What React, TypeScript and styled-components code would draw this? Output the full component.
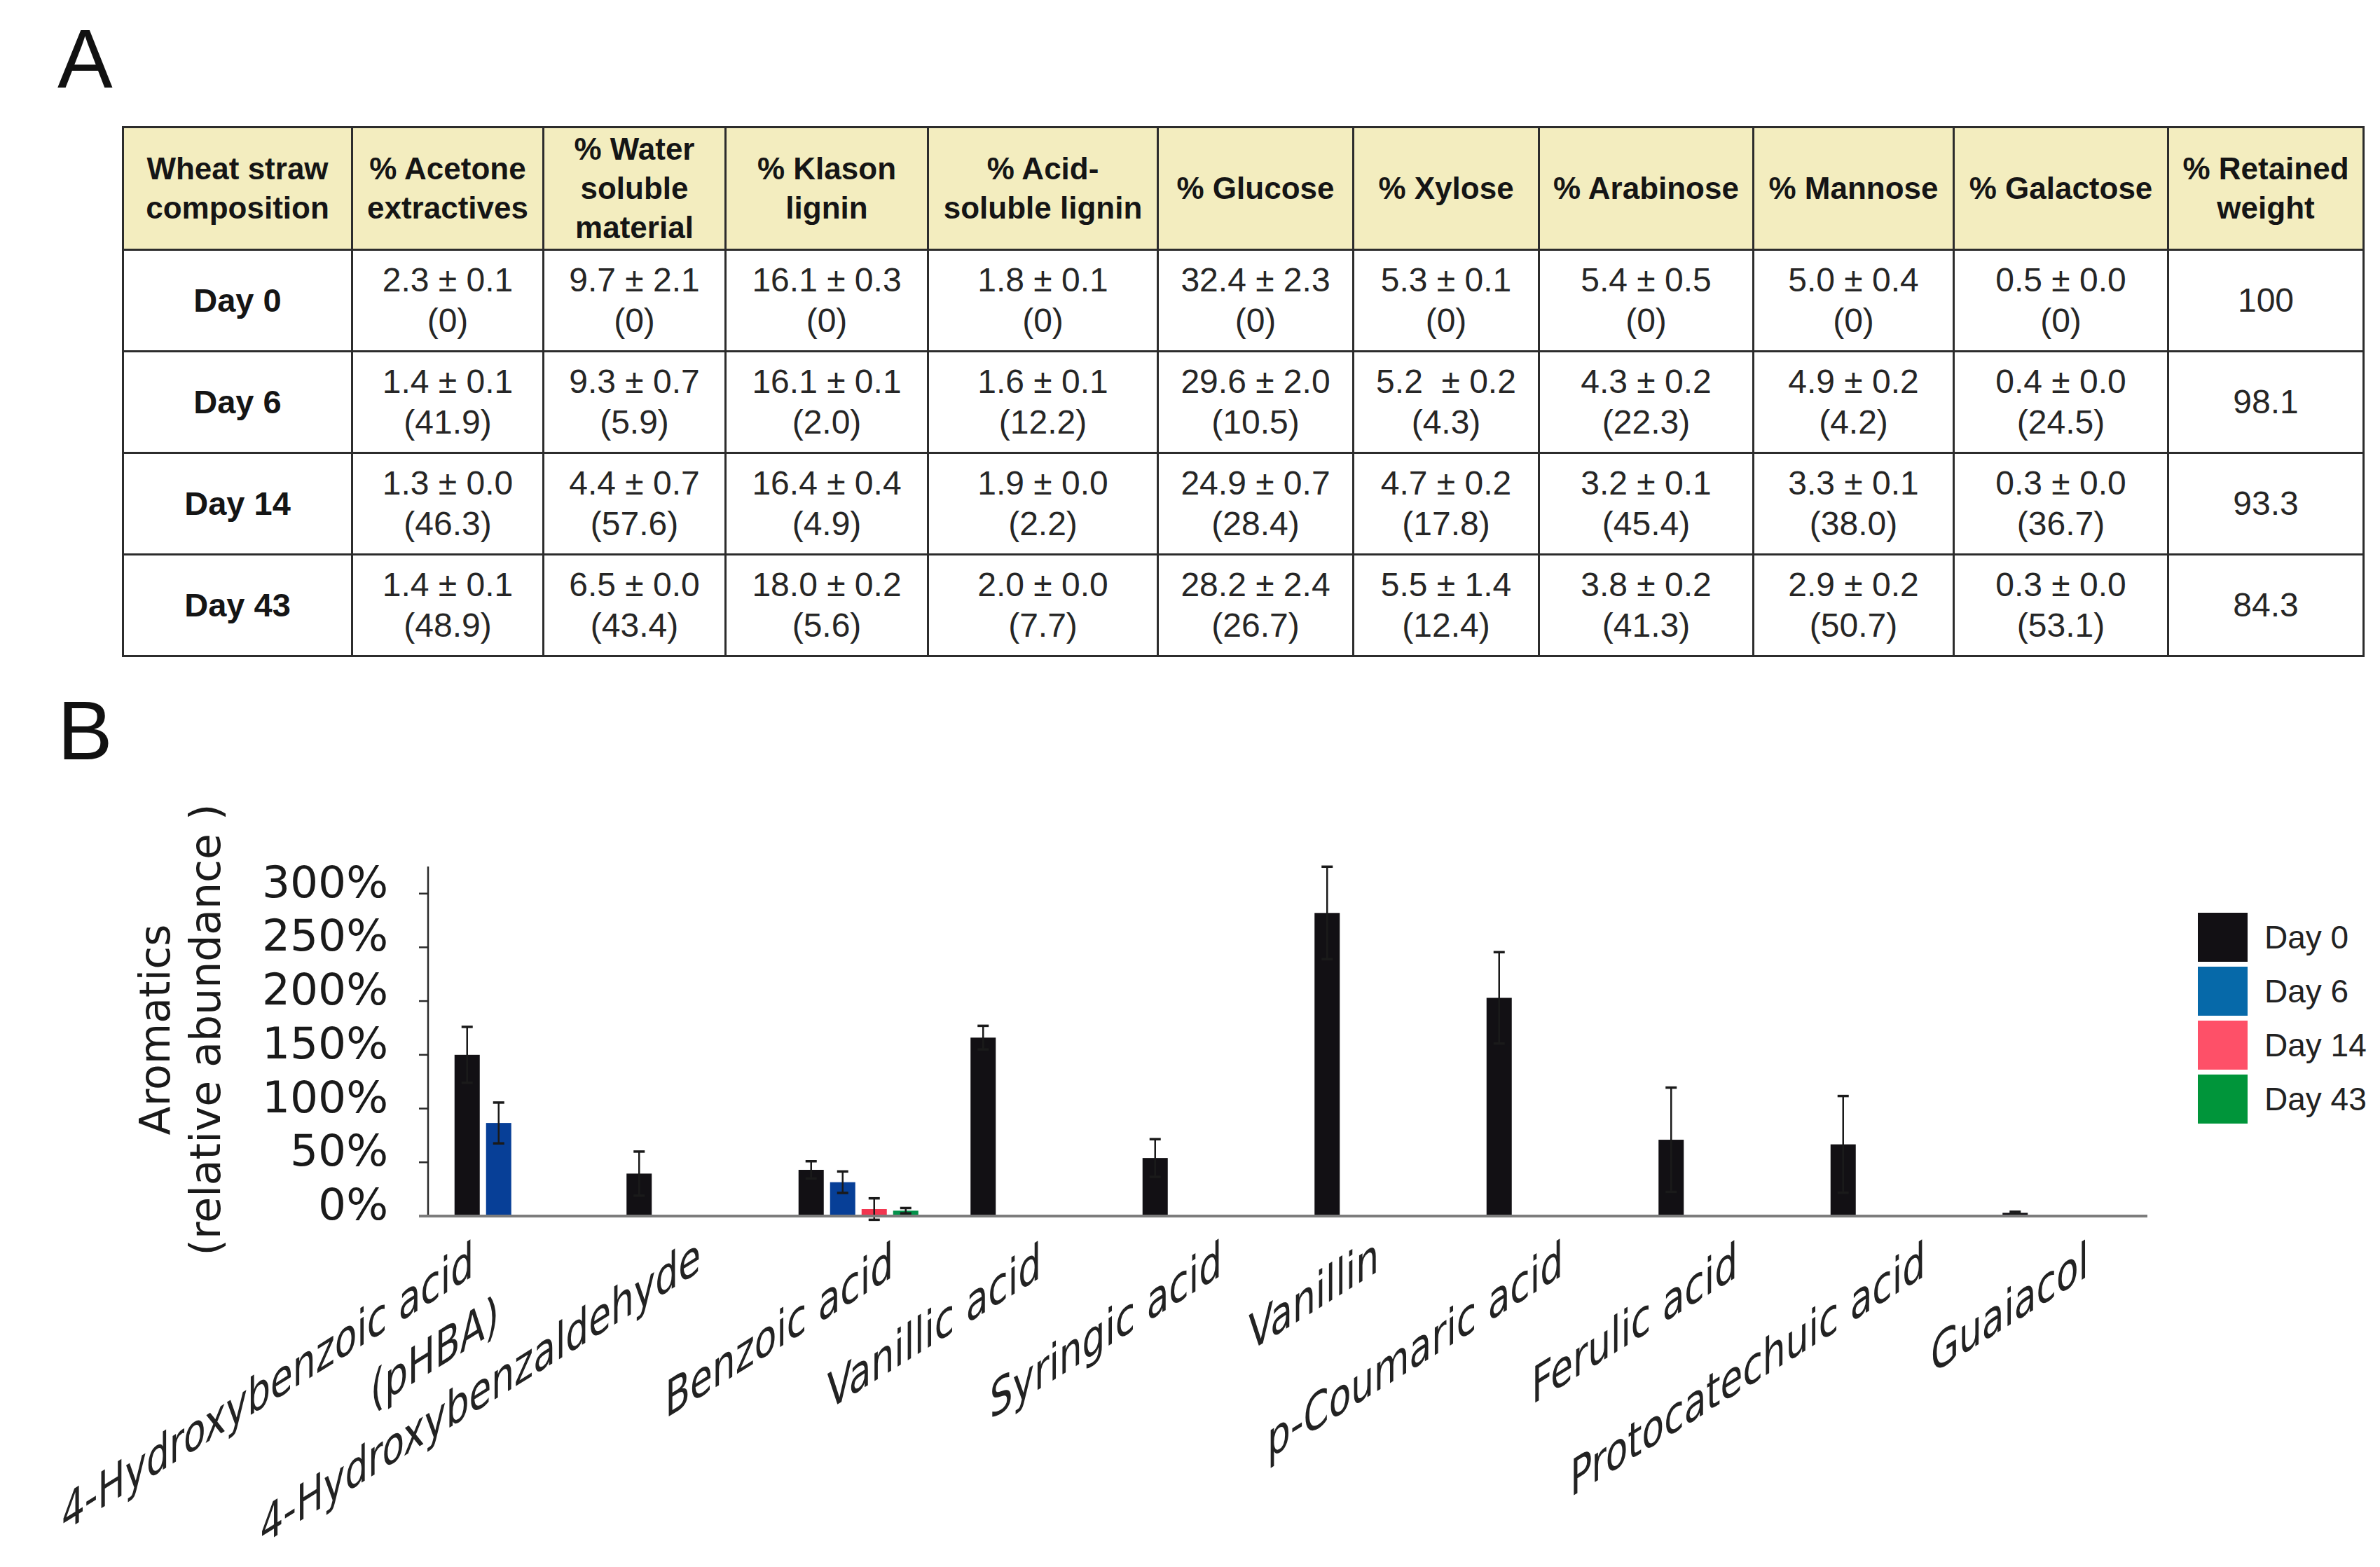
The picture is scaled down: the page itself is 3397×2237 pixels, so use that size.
import React from 'react'
import styled, { createGlobalStyle } from 'styled-components'

const GlobalStyle = createGlobalStyle`
  html, body {
    margin: 0;
    padding: 0;
    background: #ffffff;
  }
  body {
    width: 3397px;
    height: 2237px;
    overflow: hidden;
    font-family: 'Liberation Sans', Arial, sans-serif;
    color: #111;
  }
`

const Page = styled.div`
  width: 3397px;
  height: 2237px;
  box-sizing: border-box;
  padding-top: 25px;
  display: flex;
  flex-direction: column;
`

const PanelLetter = styled.div<{ $gap?: number }>`
  font-family: 'Liberation Sans', Arial, sans-serif;
  font-size: 118px;
  line-height: 118px;
  padding-left: 82px;
  margin-top: ${(p) => p.$gap ?? 0}px;
  color: #111;
`

const Table = styled.table`
  margin: 37px 0 0 174px;
  width: 3198px;
  border-collapse: collapse;
  table-layout: fixed;
  font-family: 'Liberation Sans', Arial, sans-serif;
`

const Col = styled.col<{ $w: number }>`
  width: ${(p) => p.$w}px;
`

const HeadRow = styled.tr`
  height: 175px;
`

const BodyRow = styled.tr`
  height: 145px;
`

const HeadCell = styled.th`
  background: #f3edbf;
  border: 3px solid #2c2c2c;
  padding: 0 4px;
  font-size: 44px;
  line-height: 56px;
  font-weight: 700;
  color: #151515;
  text-align: center;
  vertical-align: middle;
`

const BodyCell = styled.td<{ $bold?: boolean }>`
  border: 3px solid #2c2c2c;
  padding: 0 4px;
  font-size: ${(p) => (p.$bold ? 47 : 48)}px;
  line-height: 58px;
  font-weight: ${(p) => (p.$bold ? 700 : 400)};
  color: ${(p) => (p.$bold ? '#151515' : '#262626')};
  text-align: center;
  vertical-align: middle;
  white-space: pre;
`

const ChartRow = styled.div`
  display: flex;
  align-items: flex-start;
`

const ChartSvg = styled.svg`
  display: block;
  flex: none;
`

const TickLabel = styled.text`
  font-family: 'DejaVu Sans', Verdana, sans-serif;
  font-size: 63px;
  fill: #1a1a1a;
`

const AxisTitle = styled.text`
  font-family: 'DejaVu Sans', Verdana, sans-serif;
  font-size: 60px;
  fill: #1a1a1a;
`

const CategoryLabel = styled.text`
  font-family: 'DejaVu Sans', Verdana, sans-serif;
  font-size: 61px;
  fill: #222;
`

const Legend = styled.div`
  display: flex;
  flex-direction: column;
  gap: 7px;
  margin: 201px 0 0 27px;
`

const LegendItem = styled.div`
  display: flex;
  align-items: center;
  gap: 24px;
`

const Swatch = styled.div<{ $color: string }>`
  width: 71px;
  height: 70px;
  background: ${(p) => p.$color};
`

const LegendText = styled.span`
  font-family: 'Liberation Sans', Arial, sans-serif;
  font-size: 46px;
  color: #222;
`

const colWidths = [327, 273, 260, 289, 328, 279, 265, 306, 286, 306, 279]

const headers: string[][] = [
  ['Wheat straw', 'composition'],
  ['% Acetone', 'extractives'],
  ['% Water', 'soluble', 'material'],
  ['% Klason', 'lignin'],
  ['% Acid-', 'soluble lignin'],
  ['% Glucose'],
  ['% Xylose'],
  ['% Arabinose'],
  ['% Mannose'],
  ['% Galactose'],
  ['% Retained', 'weight'],
]

const rows: { day: string; cells: [string, string][]; retained: string }[] = [
  {
    day: 'Day 0',
    cells: [
      ['2.3 ± 0.1', '(0)'],
      ['9.7 ± 2.1', '(0)'],
      ['16.1 ± 0.3', '(0)'],
      ['1.8 ± 0.1', '(0)'],
      ['32.4 ± 2.3', '(0)'],
      ['5.3 ± 0.1', '(0)'],
      ['5.4 ± 0.5', '(0)'],
      ['5.0 ± 0.4', '(0)'],
      ['0.5 ± 0.0', '(0)'],
    ],
    retained: '100',
  },
  {
    day: 'Day 6',
    cells: [
      ['1.4 ± 0.1', '(41.9)'],
      ['9.3 ± 0.7', '(5.9)'],
      ['16.1 ± 0.1', '(2.0)'],
      ['1.6 ± 0.1', '(12.2)'],
      ['29.6 ± 2.0', '(10.5)'],
      ['5.2  ± 0.2', '(4.3)'],
      ['4.3 ± 0.2', '(22.3)'],
      ['4.9 ± 0.2', '(4.2)'],
      ['0.4 ± 0.0', '(24.5)'],
    ],
    retained: '98.1',
  },
  {
    day: 'Day 14',
    cells: [
      ['1.3 ± 0.0', '(46.3)'],
      ['4.4 ± 0.7', '(57.6)'],
      ['16.4 ± 0.4', '(4.9)'],
      ['1.9 ± 0.0', '(2.2)'],
      ['24.9 ± 0.7', '(28.4)'],
      ['4.7 ± 0.2', '(17.8)'],
      ['3.2 ± 0.1', '(45.4)'],
      ['3.3 ± 0.1', '(38.0)'],
      ['0.3 ± 0.0', '(36.7)'],
    ],
    retained: '93.3',
  },
  {
    day: 'Day 43',
    cells: [
      ['1.4 ± 0.1', '(48.9)'],
      ['6.5 ± 0.0', '(43.4)'],
      ['18.0 ± 0.2', '(5.6)'],
      ['2.0 ± 0.0', '(7.7)'],
      ['28.2 ± 2.4', '(26.7)'],
      ['5.5 ± 1.4', '(12.4)'],
      ['3.8 ± 0.2', '(41.3)'],
      ['2.9 ± 0.2', '(50.7)'],
      ['0.3 ± 0.0', '(53.1)'],
    ],
    retained: '84.3',
  },
]

// chart geometry, in page pixels
const SVG_TOP = 1102
const SVG_W = 3110
const SVG_H = 2237 - SVG_TOP
const AXIS_X = 611
const BASE_Y = 1736
const PX_PER_PCT = 1.5345
const GROUP_X0 = 666.75
const GROUP_STEP = 245.5
const SLOT = 45
const BAR_W = 36
const LABEL_ANGLE = 32

const barColors = ['#121014', '#073f97', '#f2354f', '#04914a']
const legendColors = ['#121014', '#0669a9', '#fe5068', '#00953a']
const days = ['Day 0', 'Day 6', 'Day 14', 'Day 43']

// [mean %, error %] per day, per compound
const groups: [number, number][][] = [
  [[150, 26], [86.6, 19]],
  [[39.5, 20.5]],
  [[43, 8], [31.5, 10], [6.5, 10], [5, 2.5]],
  [[166, 11]],
  [[54, 17.5]],
  [[282, 43]],
  [[203, 42.5]],
  [[71, 48.5]],
  [[66.7, 45]],
  [[3, 1]],
]

// end of each label's baseline
const xLabels = [
  { text: '4-Hydroxybenzoic acid', x: 676, y: 1821 },
  { text: '(pHBA)', x: 712, y: 1898 },
  { text: '4-Hydroxybenzaldehyde', x: 1000, y: 1814 },
  { text: 'Benzoic acid', x: 1275, y: 1822 },
  { text: 'Vanillic acid', x: 1486, y: 1823 },
  { text: 'Syringic acid', x: 1744, y: 1820 },
  { text: 'Vanillin', x: 1968, y: 1814 },
  { text: 'p-Coumaric acid', x: 2231, y: 1820 },
  { text: 'Ferulic acid', x: 2480, y: 1822 },
  { text: 'Protocatechuic acid', x: 2748, y: 1821 },
  { text: 'Guaiacol', x: 2981, y: 1821 },
]

const yOf = (v: number) => BASE_Y - v * PX_PER_PCT

const ticks = [0, 50, 100, 150, 200, 250, 300]

const BarChart = () => (
  <ChartSvg
    width={SVG_W}
    height={SVG_H}
    viewBox={`0 ${SVG_TOP} ${SVG_W} ${SVG_H}`}
  >
    <AxisTitle transform="rotate(-90)" x={-1470} y={242} textAnchor="middle">
      Aromatics
    </AxisTitle>
    <AxisTitle transform="rotate(-90)" x={-1470} y={314} textAnchor="middle">
      (relative abundance )
    </AxisTitle>

    {ticks.map((t) => (
      <g key={t}>
        <line
          x1={598}
          x2={AXIS_X}
          y1={yOf(t)}
          y2={yOf(t)}
          stroke="#2a2a2a"
          strokeWidth={2.5}
        />
        <TickLabel x={554} y={yOf(t) + 5} textAnchor="end">
          {t}%
        </TickLabel>
      </g>
    ))}
    <line x1={AXIS_X} x2={AXIS_X} y1={1237} y2={BASE_Y} stroke="#2a2a2a" strokeWidth={2.5} />

    {groups.map((bars, i) =>
      bars.map(([v, e], j) => {
        const cx = GROUP_X0 + GROUP_STEP * i + SLOT * j
        const top = yOf(v)
        const hi = yOf(v + e)
        const lo = yOf(v - e)
        return (
          <g key={`${i}-${j}`}>
            <rect
              x={cx - BAR_W / 2}
              y={top}
              width={BAR_W}
              height={BASE_Y - top}
              fill={barColors[j]}
            />
            <line x1={cx} x2={cx} y1={hi} y2={lo} stroke="#1a1a1a" strokeWidth={2.5} />
            <line x1={cx - 8} x2={cx + 8} y1={hi} y2={hi} stroke="#1a1a1a" strokeWidth={3.5} />
            <line x1={cx - 8} x2={cx + 8} y1={lo} y2={lo} stroke="#1a1a1a" strokeWidth={3.5} />
          </g>
        )
      }),
    )}

    <line x1={598} x2={3065} y1={BASE_Y} y2={BASE_Y} stroke="#7c7c7c" strokeWidth={4} />

    {xLabels.map((l) => (
      <CategoryLabel
        key={l.text}
        textAnchor="end"
        transform={`translate(${l.x} ${l.y}) rotate(-${LABEL_ANGLE}) skewX(-${LABEL_ANGLE})`}
      >
        {l.text}
      </CategoryLabel>
    ))}
  </ChartSvg>
)

const App = () => (
  <>
    <GlobalStyle />
    <Page>
      <PanelLetter>A</PanelLetter>
      <Table>
        <colgroup>
          {colWidths.map((w, i) => (
            <Col key={i} $w={w} />
          ))}
        </colgroup>
        <thead>
          <HeadRow>
            {headers.map((lines) => (
              <HeadCell key={lines.join(' ')}>
                {lines.map((line, k) => (
                  <React.Fragment key={line}>
                    {k > 0 && <br />}
                    {line}
                  </React.Fragment>
                ))}
              </HeadCell>
            ))}
          </HeadRow>
        </thead>
        <tbody>
          {rows.map((row) => (
            <BodyRow key={row.day}>
              <BodyCell $bold>{row.day}</BodyCell>
              {row.cells.map(([value, change], k) => (
                <BodyCell key={k}>
                  {value}
                  <br />
                  {change}
                </BodyCell>
              ))}
              <BodyCell>{row.retained}</BodyCell>
            </BodyRow>
          ))}
        </tbody>
      </Table>

      <PanelLetter $gap={46}>B</PanelLetter>
      <ChartRow>
        <BarChart />
        <Legend>
          {days.map((d, i) => (
            <LegendItem key={d}>
              <Swatch $color={legendColors[i]} />
              <LegendText>{d}</LegendText>
            </LegendItem>
          ))}
        </Legend>
      </ChartRow>
    </Page>
  </>
)

export default App
